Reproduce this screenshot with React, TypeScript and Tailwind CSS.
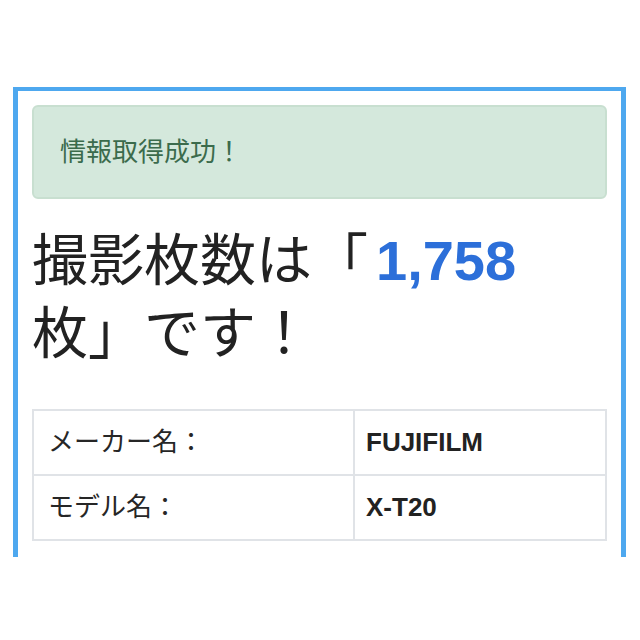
const rows = [
  { label: 'メーカー名：', value: 'FUJIFILM' },
  { label: 'モデル名：', value: 'X-T20' },
];

export default function App() {
  return (
    <div
      className="h-[640px] w-[640px] bg-white pt-[87px] pl-[13px]"
      style={{ fontFamily: '"Liberation Sans", "Noto Sans CJK JP", sans-serif' }}
    >
      <div className="h-[470px] w-[613px] border-x-[5px] border-t-[4px] border-[#4ea8ef] px-[14px] pt-[14px]">
        <div className="flex h-[94px] items-center rounded-[6px] border-2 border-[#c8dfd0] bg-[#d4e8dc] pl-[26px] text-[26px] text-[#3b6b4c]">
          情報取得成功！
        </div>

        <h1 className="mt-[25px] text-[56px] leading-[73px] font-normal text-[#222]">
          撮影枚数は「<span className="ml-[8px] font-bold text-[#2c6fd9]">1,758</span>
          <br />
          枚」です！
        </h1>

        <div className="mt-[39px] grid grid-cols-[321px_1fr] border-t-2 border-l-2 border-[#e0e3e7]">
          {rows.map((row) => (
            <div key={row.label} className="contents">
              <div className="flex h-[65px] items-center border-r-2 border-b-2 border-[#e0e3e7] pl-[14px] text-[26px] text-[#262626]">
                {row.label}
              </div>
              <div className="flex h-[65px] items-center border-r-2 border-b-2 border-[#e0e3e7] pl-[11px] text-[26px] font-bold text-[#222]">
                {row.value}
              </div>
            </div>
          ))}
        </div>
      </div>
    </div>
  );
}
